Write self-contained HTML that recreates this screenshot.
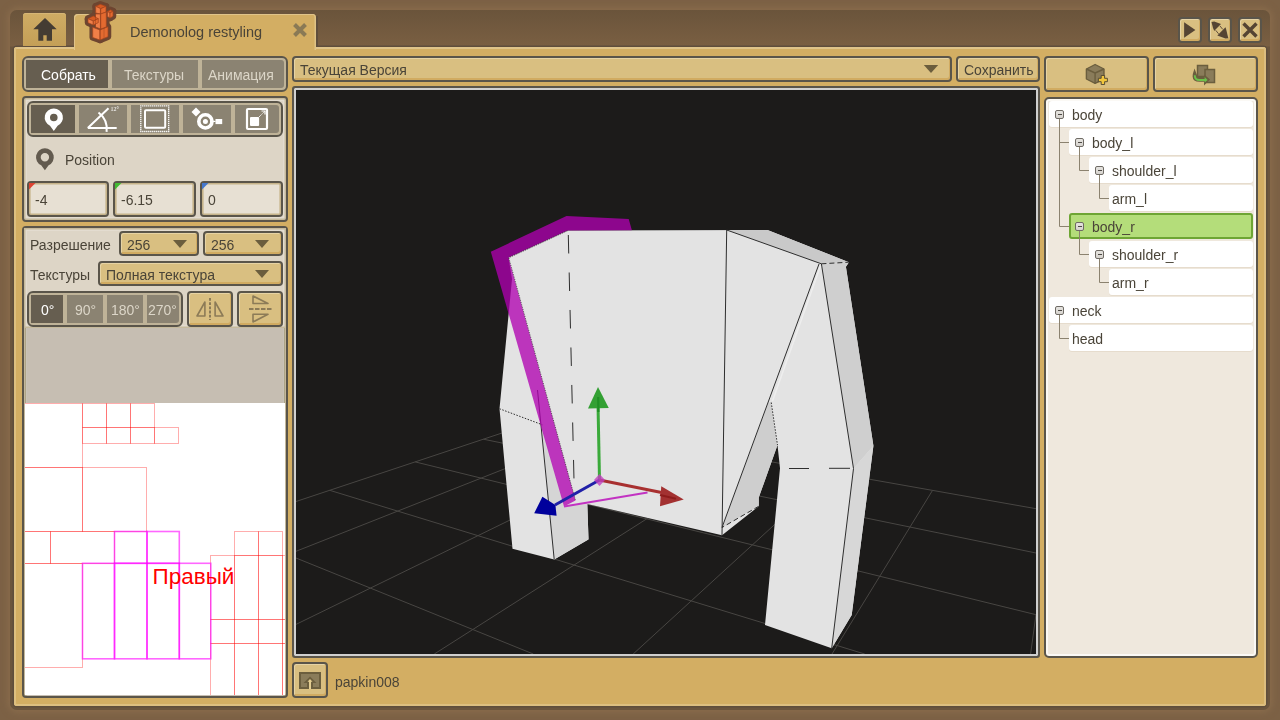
<!DOCTYPE html>
<html><head><meta charset="utf-8">
<style>
*{box-sizing:border-box;margin:0;padding:0}
html,body{width:1280px;height:720px;overflow:hidden}
body{background:#7c6145;font-family:"Liberation Sans",sans-serif;font-size:14px;color:#4a4438;position:relative}
.a{position:absolute}
.t{position:absolute;white-space:pre;line-height:1;will-change:transform}
.frame{left:10px;top:10px;width:1260px;height:700px;background:linear-gradient(#6a543b 0px,#7a5f42 36px,#6b553d 37px);border-radius:7px;box-shadow:0 0 7px 2px #8b6d4d}
.gold{left:14px;top:47px;width:1252px;height:659px;background:#d3ae63;border-radius:3px;box-shadow:inset 2px 0 0 #ddbf80,inset -2px 0 0 #dcbd7e,inset 0 -2px 0 #ddbf80,inset 0 2px 0 #e0c48a,0 0 0 1.5px #5f4e3c}
.dk{border:2px solid #5a554a}
.seg{position:absolute;background:#8b8372;color:#dcd6c8}
.seg.on{background:#665e50;color:#fff}
.btn{position:absolute;border:2px solid #5a554a;border-radius:4px;background:#d9bf81;box-shadow:inset 1px 1px 0 #e6d3a4,inset -1px -2px 0 #d1ab61}
.tri{position:absolute;width:0;height:0;border-left:7px solid transparent;border-right:7px solid transparent;border-top:8px solid #6b5d3d}
.item{position:absolute;background:#fff;border-radius:3px;height:26px;right:4px;box-shadow:0 1px 0 #e6dccd}
.mi{position:absolute;width:9px;height:9px;border:1px solid #6f6b65;border-radius:2px;background:linear-gradient(#e6e4e0,#d6d3ce)}
.mi:after{content:"";position:absolute;left:1.5px;top:3px;width:4px;height:1.3px;background:#4d4a45}
</style></head><body>
<div class="a frame"></div>
<div class="a" style="left:14px;top:45.5px;width:1252px;height:2px;background:#5f4e3c"></div>
<div class="a gold"></div>
<!-- home tab -->
<div class="a" style="left:23px;top:13px;width:43px;height:33px;background:linear-gradient(#cfac64,#c49f57);border-radius:3px 3px 0 0;box-shadow:inset 0 1px 0 #d6b676"></div>
<!-- active tab -->
<div class="a" style="left:74px;top:14px;width:242px;height:36px;background:#d3ae63;border-radius:4px 4px 0 0;box-shadow:inset 1px 1px 0 #e0c48a,inset -1.5px 0 0 #dfc386"></div>
<div class="a" style="left:316px;top:16px;width:2px;height:31px;background:#5f4e3c"></div>

<div class="t" style="left:130px;top:25px;font-size:14.5px">Demonolog restyling</div>

<!-- left: tab group -->
<div class="a dk" style="left:22px;top:56px;width:266px;height:36px;border-radius:6px;background:#bfb398"></div>
<div class="seg on" style="left:26px;top:60px;width:82px;height:28px"></div>
<div class="seg" style="left:112px;top:60px;width:86px;height:28px"></div>
<div class="seg" style="left:202px;top:60px;width:82px;height:28px;border-radius:0 3px 3px 0"></div>
<div class="t" style="left:41px;top:68px;color:#fff">Собрать</div>
<div class="t" style="left:124px;top:68px;color:#dcd6c8">Текстуры</div>
<div class="t" style="left:208px;top:68px;color:#dcd6c8">Анимация</div>

<!-- tools panel -->
<div class="a dk" style="left:22px;top:96px;width:266px;height:126px;border-radius:4px;background:#ddd5c6;box-shadow:inset 0 0 0 1.5px #c6ba9c,inset 0 0 0 3px #e3dcd0"></div>
<div class="a dk" style="left:27px;top:101px;width:256px;height:36px;border-radius:6px;background:#bfb398"></div>
<div class="seg on" style="left:31px;top:105px;width:44px;height:28px"></div>
<div class="seg" style="left:79px;top:105px;width:48px;height:28px"></div>
<div class="seg" style="left:131px;top:105px;width:48px;height:28px"></div>
<div class="seg" style="left:183px;top:105px;width:48px;height:28px"></div>
<div class="seg" style="left:235px;top:105px;width:44px;height:28px;border-radius:0 3px 3px 0"></div>

<div class="t" style="left:65px;top:153px">Position</div>
<div class="a dk" style="left:27px;top:181px;width:82px;height:36px;border-radius:4px;background:#e7e0d3;box-shadow:inset 0 0 0 1.6px #c6b389"></div>
<div class="a dk" style="left:113px;top:181px;width:83px;height:36px;border-radius:4px;background:#e7e0d3;box-shadow:inset 0 0 0 1.6px #c6b389"></div>
<div class="a dk" style="left:200px;top:181px;width:83px;height:36px;border-radius:4px;background:#e7e0d3;box-shadow:inset 0 0 0 1.6px #c6b389"></div>
<div class="t" style="left:35px;top:193px">-4</div>
<div class="t" style="left:121px;top:193px">-6.15</div>
<div class="t" style="left:208px;top:193px">0</div>

<!-- settings panel -->
<div class="a dk" style="left:22px;top:226px;width:266px;height:472px;border-radius:4px;background:#c6beb2;box-shadow:inset 1px 0 0 #c3b79b,inset 2px 0 0 #aca385,inset 3px 0 0 #c9c3b8,inset -1px 0 0 #c3b79b,inset -2px 0 0 #aca385,inset -3px 0 0 #c9c3b8"></div>
<div class="a" style="left:24px;top:228px;width:262px;height:100px;background:#ddd5c6;box-shadow:inset 0 0 0 1.5px #c6ba9c,inset 0 0 0 3px #e3dcd0"></div>
<div class="t" style="left:30px;top:238px">Разрешение</div>
<div class="btn" style="left:119px;top:231px;width:80px;height:25px"></div>
<div class="btn" style="left:203px;top:231px;width:80px;height:25px"></div>
<div class="t" style="left:127px;top:238px">256</div>
<div class="t" style="left:211px;top:238px">256</div>
<div class="t" style="left:30px;top:268px">Текстуры</div>
<div class="btn" style="left:98px;top:261px;width:185px;height:25px"></div>
<div class="t" style="left:106px;top:268px">Полная текстура</div>

<div class="a dk" style="left:27px;top:291px;width:156px;height:36px;border-radius:6px;background:#bfb398"></div>
<div class="seg on" style="left:31px;top:295px;width:32px;height:28px"></div>
<div class="seg" style="left:67px;top:295px;width:36px;height:28px"></div>
<div class="seg" style="left:107px;top:295px;width:36px;height:28px"></div>
<div class="seg" style="left:147px;top:295px;width:32px;height:28px;border-radius:0 3px 3px 0"></div>
<div class="t" style="left:41px;top:303px;color:#fff">0°</div>
<div class="t" style="left:75px;top:303px;color:#dcd6c8">90°</div>
<div class="t" style="left:111px;top:303px;color:#dcd6c8">180°</div>
<div class="t" style="left:148px;top:303px;color:#dcd6c8">270°</div>
<div class="btn" style="left:187px;top:291px;width:46px;height:36px"></div>
<div class="btn" style="left:237px;top:291px;width:46px;height:36px"></div>

<!-- texture canvas -->
<div class="a" style="left:25px;top:403px;width:260px;height:292px;background:#fff"></div>

<!-- TEX --><svg class="a" style="left:25px;top:403px" width="260" height="292" viewBox="25 403 260 292"><g fill="none" stroke="#ff0000" stroke-opacity="0.32" stroke-width="1"><rect x="24" y="403.5" width="58.5" height="64.0"/><rect x="82.5" y="403.5" width="24.0" height="24.0"/><rect x="106.5" y="403.5" width="24.0" height="24.0"/><rect x="130.5" y="403.5" width="24.0" height="24.0"/><rect x="82.5" y="427.5" width="24.0" height="16.0"/><rect x="106.5" y="427.5" width="24.0" height="16.0"/><rect x="130.5" y="427.5" width="24.0" height="16.0"/><rect x="154.5" y="427.5" width="24.0" height="16.0"/><rect x="24" y="467.5" width="58.5" height="64.0"/><rect x="82.5" y="467.5" width="64.0" height="64.0"/><rect x="24" y="531.5" width="26.5" height="32.0"/><rect x="50.5" y="531.5" width="64.0" height="32.0"/><rect x="24" y="563.5" width="58.5" height="104.0"/><rect x="234.5" y="531.5" width="24.0" height="24.0"/><rect x="258.5" y="531.5" width="24.0" height="24.0"/><rect x="210.5" y="555.5" width="24.0" height="64.0"/><rect x="234.5" y="555.5" width="24.0" height="64.0"/><rect x="258.5" y="555.5" width="24.0" height="64.0"/><rect x="282.5" y="555.5" width="17.5" height="64.0"/><rect x="210.5" y="619.5" width="24.0" height="24.0"/><rect x="234.5" y="619.5" width="24.0" height="24.0"/><rect x="258.5" y="619.5" width="24.0" height="24.0"/><rect x="282.5" y="619.5" width="17.5" height="24.0"/><rect x="210.5" y="643.5" width="24.0" height="56.5"/><rect x="234.5" y="643.5" width="24.0" height="56.5"/><rect x="258.5" y="643.5" width="24.0" height="56.5"/><rect x="282.5" y="643.5" width="17.5" height="56.5"/></g><g fill="none" stroke="#ff00ff" stroke-opacity="0.6" stroke-width="1.6"><rect x="114.5" y="531.5" width="32.5" height="31.799999999999955"/><rect x="147" y="531.5" width="32.30000000000001" height="31.799999999999955"/><rect x="82.5" y="563.3" width="32.0" height="95.5"/><rect x="114.5" y="563.3" width="32.5" height="95.5"/><rect x="147" y="563.3" width="32.30000000000001" height="95.5"/><rect x="179.3" y="563.3" width="31.5" height="95.5"/></g><text x="152.5" y="584.2" font-family="Liberation Sans" font-size="22.5" fill="#ff0000">Правый</text></svg><!-- /TEX -->
<!-- center top -->
<div class="btn" style="left:292px;top:56px;width:660px;height:26px"></div>
<div class="t" style="left:300px;top:63px">Текущая Версия</div>
<div class="btn" style="left:956px;top:56px;width:84px;height:26px"></div>
<div class="t" style="left:964px;top:63px">Сохранить</div>

<!-- viewport -->
<div class="a" style="left:292px;top:86px;width:748px;height:572px;border:2px solid #5a554a;border-radius:3px;background:#1c1b1a;box-shadow:inset 0 0 0 2px #d0d0cf"></div>

<!-- VP --><svg class="a" style="left:0;top:0" width="1280" height="720">
<defs><clipPath id="vp"><rect x="296" y="90" width="740" height="564"/></clipPath></defs>
<g clip-path="url(#vp)">
<path d="M539.0 420.7L296.0 501.5M599.3 431.4L296.0 551.3M667.1 443.4L296.0 624.4M743.9 457.0L434.3 654.0M831.5 472.5L633.2 654.0M932.5 490.4L832.0 654.0M1036.0 614.4L1030.6 654.0M539.0 420.7L1036.0 508.7M483.4 439.2L1036.0 553.0M415.2 461.9L1036.0 614.7M329.7 490.3L864.7 654.0M296.0 558.0L533.3 654.0" stroke="#484643" stroke-width="1" fill="none"/>
<polygon points="508.5,257.5 567.5,230.5 767.5,230 848.9,262.2 845.9,266.8 873.4,445.7 851.7,615 831.7,648.3 765,625 780,468.3 777.5,445 758.75,497.5 758.75,506.25 722,535.2 587.3,503.9 588.5,539.5 554.2,559.6 512.5,548.75 499.5,408.75 512,279" fill="#e3e3e3"/>
<polygon points="726.7,230 767.5,230 848.9,262.2 821.4,263.8" fill="#c9c9c9"/>
<polygon points="821.4,263.8 848.9,262.2 845.9,266.8 873.4,445.7 853.5,468.5" fill="#cfcfcf"/><polygon points="853.5,468.5 873.4,445.7 851.7,615 831.7,648.3" fill="#d7d7d7"/>
<polygon points="768.5,402.5 771.25,402.5 777.5,445 758.75,497.5 758.75,506.25 722,527.5" fill="#cecece"/>
<polygon points="541.7,426 554.2,559.4 588.5,539.3 587.3,503.9 564,506.5" fill="#d5d5d5"/>
<g stroke="#2e2e2e" stroke-width="1" fill="none">
<path d="M726.7 230L722 535M726.7 230L821.4 263.8M821.4 263.8L853.5 468.5L831.7 648.3M819 264L722 527.5M554.2 559.4L537.5 390"/>
<path d="M821.4 263.8L848.9 262.2M758.75 506.25L722 527.5" stroke-dasharray="5 3"/>
<path d="M771.25 402.5L777.5 445M499.5 408.75L542.4 424.8" stroke-dasharray="1.5 1.5"/>
<path d="M789 468.5L809 468.5M829 468.3L850 468.3"/>
<path d="M568.3 235L574 480" stroke-dasharray="18.5 19"/>
</g>
<path d="M820.5 266L772.5 401" stroke="#eeeeee" stroke-width="1.5"/>
<polygon points="490.8,251.7 566.5,216 628.7,219 631.9,230.2 567.5,230.5 508.5,257.5 575.5,500.5 564,506.5" fill="#b000b0" fill-opacity="0.77"/>
<path d="M567.5 230.8L508.8 257.8L575.5 500.5" stroke="#1e1e1e" stroke-width="0.9" fill="none" stroke-dasharray="1.2 1.2" opacity="0.7"/>
<path d="M564 506.5L647.5 492.5" stroke="#c233c2" stroke-width="2"/>
<path d="M599.5 480L598 404" stroke="#3aaa3a" stroke-width="3"/>
<polygon points="598,387 608.75,408 588,408.5" fill="#33a033"/><path d="M598.2 397L598.4 412" stroke="#1f8f24" stroke-width="2.2"/>
<path d="M599.5 480L664 493" stroke="#a83030" stroke-width="3"/>
<polygon points="683.75,499.5 661.25,486.25 660,506.25" fill="#a33131"/><path d="M660 495L676 498.7" stroke="#8e1c1c" stroke-width="2.2"/>
<path d="M599.5 480L555 505" stroke="#2020a8" stroke-width="3"/>
<polygon points="534.2,513.3 542.4,496.8 555.4,505.1 556.6,515.7" fill="#00009c"/>
<polygon points="599.5,474 605,480 599.5,486 594,480" fill="#c040c0" fill-opacity="0.8"/>
</g></svg><!-- /VP -->
<!-- bottom -->
<div class="btn" style="left:292px;top:662px;width:36px;height:36px"></div>
<div class="t" style="left:335px;top:675px">papkin008</div>

<!-- right -->
<div class="btn" style="left:1044px;top:56px;width:105px;height:36px"></div>
<div class="btn" style="left:1153px;top:56px;width:105px;height:36px"></div>
<div class="a" style="left:1044px;top:97px;width:214px;height:561px;border:2px solid #5a554a;border-radius:5px;background:#efe8dd;box-shadow:inset 0 0 0 2px #fbf9f5"></div>

<!-- tree -->
<div class="item" style="left:1049px;top:101px;width:204px"></div>
<div class="item" style="left:1069px;top:129px;width:184px"></div>
<div class="item" style="left:1089px;top:157px;width:164px"></div>
<div class="item" style="left:1109px;top:185px;width:144px"></div>
<div class="a" style="left:1069px;top:213px;width:184px;height:26px;background:#b4dd7a;border:2px solid #6ea534;border-radius:3px"></div>
<div class="item" style="left:1089px;top:241px;width:164px"></div>
<div class="item" style="left:1109px;top:269px;width:144px"></div>
<div class="item" style="left:1049px;top:297px;width:204px"></div>
<div class="item" style="left:1069px;top:325px;width:184px"></div>
<svg class="a" style="left:0;top:0" width="1280" height="720"><g stroke="#8b826f" stroke-width="1" fill="none"><path d="M1059.5 119L1059.5 226.5"/><path d="M1059.5 142.5L1069 142.5"/><path d="M1059.5 226.5L1069 226.5"/><path d="M1079.5 147L1079.5 170.5"/><path d="M1079.5 170.5L1089 170.5"/><path d="M1099.5 175L1099.5 198.5"/><path d="M1099.5 198.5L1109 198.5"/><path d="M1079.5 231L1079.5 254.5"/><path d="M1079.5 254.5L1089 254.5"/><path d="M1099.5 259L1099.5 282.5"/><path d="M1099.5 282.5L1109 282.5"/><path d="M1059.5 315L1059.5 338.5"/><path d="M1059.5 338.5L1069 338.5"/></g></svg>
<div class="mi" style="left:1055px;top:110px"></div>
<div class="t" style="left:1072px;top:108px">body</div>
<div class="mi" style="left:1075px;top:138px"></div>
<div class="t" style="left:1092px;top:136px">body_l</div>
<div class="mi" style="left:1095px;top:166px"></div>
<div class="t" style="left:1112px;top:164px">shoulder_l</div>
<div class="t" style="left:1112px;top:192px">arm_l</div>
<div class="mi" style="left:1075px;top:222px"></div>
<div class="t" style="left:1092px;top:220px">body_r</div>
<div class="mi" style="left:1095px;top:250px"></div>
<div class="t" style="left:1112px;top:248px">shoulder_r</div>
<div class="t" style="left:1112px;top:276px">arm_r</div>
<div class="mi" style="left:1055px;top:306px"></div>
<div class="t" style="left:1072px;top:304px">neck</div>
<div class="t" style="left:1072px;top:332px">head</div>
<!-- window buttons -->
<div class="btn" style="left:1178px;top:17px;width:24px;height:25.5px"></div>
<div class="btn" style="left:1208px;top:17px;width:24px;height:25.5px"></div>
<div class="btn" style="left:1238px;top:17px;width:24px;height:25.5px"></div>

<!-- ICONS --><svg class="a" style="left:0;top:0" width="1280" height="720">
<!-- home -->
<path d="M45 18L56.7 29.2H52V40.8H46.7V35.3H43.3V40.8H38.3V29.2H33.3Z" fill="#443c33"/>
<!-- logo -->
<g stroke="#6e4530" stroke-width="6.5" stroke-linejoin="round" fill="#6e4530"><path d="M95.7 6.3L100.3 4.3L106 6.3L100.7 8.7Z"/><path d="M95.7 6.3L100.7 8.7L100.7 14L95.7 13Z"/><path d="M100.7 8.7L106 6.3L106 12L100.7 14Z"/><path d="M107.5 11.5L110.5 9.8L113 11.2L110 13Z"/><path d="M107.5 11.5L110 13L110 18L107.5 16.5Z"/><path d="M110 13L113 11.2L113 16.3L110 18Z"/><path d="M95.5 14L100.7 14L100.7 29L95.5 27Z"/><path d="M100.7 14L106.3 12L106.3 27L100.7 29Z"/><path d="M88 18.7L93.3 16L98.3 18.7L93.3 21Z"/><path d="M88 18.7L93.3 21L93.3 25L88 22.7Z"/><path d="M93.3 21L98.3 18.7L98.3 22.7L93.3 25Z"/><path d="M92.7 27.3L100 30L100 40L92.7 37.5Z"/><path d="M100 30L108 26.7L108 36.7L100 40Z"/></g>
<g stroke="#a4441c" stroke-width="0.7" stroke-linejoin="round"><path d="M95.7 6.3L100.3 4.3L106 6.3L100.7 8.7Z" fill="#d65a22"/><path d="M95.7 6.3L100.7 8.7L100.7 14L95.7 13Z" fill="#f07f48"/><path d="M100.7 8.7L106 6.3L106 12L100.7 14Z" fill="#e46a30"/><path d="M107.5 11.5L110.5 9.8L113 11.2L110 13Z" fill="#d65a22"/><path d="M107.5 11.5L110 13L110 18L107.5 16.5Z" fill="#f07f48"/><path d="M110 13L113 11.2L113 16.3L110 18Z" fill="#e46a30"/><path d="M95.5 14L100.7 14L100.7 29L95.5 27Z" fill="#f07f48"/><path d="M100.7 14L106.3 12L106.3 27L100.7 29Z" fill="#e46a30"/><path d="M88 18.7L93.3 16L98.3 18.7L93.3 21Z" fill="#d65a22"/><path d="M88 18.7L93.3 21L93.3 25L88 22.7Z" fill="#f07f48"/><path d="M93.3 21L98.3 18.7L98.3 22.7L93.3 25Z" fill="#e46a30"/><path d="M92.7 27.3L100 30L100 40L92.7 37.5Z" fill="#f07f48"/><path d="M100 30L108 26.7L108 36.7L100 40Z" fill="#e46a30"/></g>
<path d="M100.3 9V40M104 28V38.5M95.5 14V27" stroke="#8a3a1a" stroke-width="0.6" opacity="0.6"/>
<!-- tab close -->
<path d="M294.5 24.5L305.5 35.5M305.5 24.5L294.5 35.5" stroke="#8a7a55" stroke-width="4"/>
<!-- window buttons -->
<path d="M1184.1 22.2L1195.4 30L1184.1 37.8Z" fill="#554433"/>
<path d="M1243.5 23.5L1256.5 36.5M1256.5 23.5L1243.5 36.5" stroke="#554433" stroke-width="3.4"/>
<path d="M1211.5 22L1214.2 21.5L1221 24L1215 30L1214.3 31L1213 28Z" fill="#554433"/><path d="M1228.3 38.2L1225.5 38.5L1217.3 35.6L1225.5 27.2L1226.2 29.5Z" fill="#554433"/><path d="M1220 26L1222.7 29.3M1215.7 30.3L1218.6 33.8" stroke="#554433" stroke-width="0.9"/>
<!-- tool icons -->
<path fill="#fff" fill-rule="evenodd" d="M53.8 108.5A9 9 0 0 1 57.6 125.7L53.8 131L50 125.7A9 9 0 0 1 53.8 108.5ZM53.8 113.7A3.8 3.8 0 1 0 53.8 121.3A3.8 3.8 0 1 0 53.8 113.7Z"/>
<g stroke="#fff" stroke-width="2" fill="none">
<path d="M87.8 128H116.7M87.8 128L108.5 108.3"/>
<path d="M98.5 112.5A21 21 0 0 1 106.6 131.8" />
</g>
<text x="110.5" y="111" font-family="Liberation Serif" font-size="6" fill="#fff">12°</text>
<path fill="#fff" d="M140.15 105.15h1.3v1.3h-1.3zM140.15 130.85h1.3v1.3h-1.3zM142.14 105.15h1.3v1.3h-1.3zM142.14 130.85h1.3v1.3h-1.3zM144.14 105.15h1.3v1.3h-1.3zM144.14 130.85h1.3v1.3h-1.3zM146.13 105.15h1.3v1.3h-1.3zM146.13 130.85h1.3v1.3h-1.3zM148.12 105.15h1.3v1.3h-1.3zM148.12 130.85h1.3v1.3h-1.3zM150.11 105.15h1.3v1.3h-1.3zM150.11 130.85h1.3v1.3h-1.3zM152.11 105.15h1.3v1.3h-1.3zM152.11 130.85h1.3v1.3h-1.3zM154.10 105.15h1.3v1.3h-1.3zM154.10 130.85h1.3v1.3h-1.3zM156.09 105.15h1.3v1.3h-1.3zM156.09 130.85h1.3v1.3h-1.3zM158.09 105.15h1.3v1.3h-1.3zM158.09 130.85h1.3v1.3h-1.3zM160.08 105.15h1.3v1.3h-1.3zM160.08 130.85h1.3v1.3h-1.3zM162.07 105.15h1.3v1.3h-1.3zM162.07 130.85h1.3v1.3h-1.3zM164.06 105.15h1.3v1.3h-1.3zM164.06 130.85h1.3v1.3h-1.3zM166.06 105.15h1.3v1.3h-1.3zM166.06 130.85h1.3v1.3h-1.3zM168.05 105.15h1.3v1.3h-1.3zM168.05 130.85h1.3v1.3h-1.3zM140.15 107.13h1.3v1.3h-1.3zM168.05 107.13h1.3v1.3h-1.3zM140.15 109.10h1.3v1.3h-1.3zM168.05 109.10h1.3v1.3h-1.3zM140.15 111.08h1.3v1.3h-1.3zM168.05 111.08h1.3v1.3h-1.3zM140.15 113.06h1.3v1.3h-1.3zM168.05 113.06h1.3v1.3h-1.3zM140.15 115.03h1.3v1.3h-1.3zM168.05 115.03h1.3v1.3h-1.3zM140.15 117.01h1.3v1.3h-1.3zM168.05 117.01h1.3v1.3h-1.3zM140.15 118.99h1.3v1.3h-1.3zM168.05 118.99h1.3v1.3h-1.3zM140.15 120.97h1.3v1.3h-1.3zM168.05 120.97h1.3v1.3h-1.3zM140.15 122.94h1.3v1.3h-1.3zM168.05 122.94h1.3v1.3h-1.3zM140.15 124.92h1.3v1.3h-1.3zM168.05 124.92h1.3v1.3h-1.3zM140.15 126.90h1.3v1.3h-1.3zM168.05 126.90h1.3v1.3h-1.3zM140.15 128.87h1.3v1.3h-1.3zM168.05 128.87h1.3v1.3h-1.3z"/>
<rect x="145" y="110.2" width="20.2" height="17.6" rx="1" fill="none" stroke="#fff" stroke-width="2"/>
<path fill="#fff" fill-rule="evenodd" d="M205.4 113A8.4 8.4 0 1 0 205.4 129.8A8.4 8.4 0 1 0 205.4 113ZM205.4 116.6A4.8 4.8 0 1 1 205.4 126.2A4.8 4.8 0 1 1 205.4 116.6Z"/>
<circle cx="205.4" cy="121.4" r="2.5" fill="#fff"/>
<path d="M210 121.4H215.5" stroke="#fff" stroke-width="1.2"/>
<rect x="215.5" y="119" width="6.7" height="5.1" fill="#fff"/>
<path d="M196 107.5L200.5 112L196 116.5L191.5 112Z" fill="#fff"/>
<rect x="247" y="109" width="20" height="20" rx="1" fill="none" stroke="#fff" stroke-width="2.2"/>
<rect x="250" y="117" width="9.1" height="8.9" rx="1" fill="#fff"/>
<path d="M259 117L264.5 111.5" stroke="#fff" stroke-width="1" stroke-dasharray="1.2 0.6"/>
<path d="M261.5 111H265V114.5" stroke="#fff" stroke-width="1.2" fill="none"/>
<!-- position pin -->
<path fill="#635b4f" fill-rule="evenodd" d="M44.9 148.3A8.9 8.9 0 0 1 48.6 165.3L44.9 170.3L41.2 165.3A8.9 8.9 0 0 1 44.9 148.3ZM44.9 153A4.2 4.2 0 1 0 44.9 161.4A4.2 4.2 0 1 0 44.9 153Z"/>
<!-- input corners -->
<path d="M29 183H35.5L29 189.5Z" fill="#dd4433"/>
<path d="M115 183H121.5L115 189.5Z" fill="#44bb33"/>
<path d="M202 183H208.5L202 189.5Z" fill="#4477cc"/>
<!-- dropdown arrows -->
<path d="M173 240H187L180 248Z" fill="#6b5d3d"/>
<path d="M255 240H269L262 248Z" fill="#6b5d3d"/>
<path d="M255 270H269L262 278Z" fill="#6b5d3d"/>
<path d="M923.8 65H938.2L931 73Z" fill="#6b5d3d"/>
<!-- flip icons -->
<g stroke="#8c7b57" stroke-width="1.6" fill="none" stroke-linejoin="round">
<path d="M204.9 302L197 316H204.9Z"/>
<path d="M215.1 302L223 316H215.1Z"/>
<path d="M210 298V320" stroke-width="2" stroke-dasharray="2.8 1.4"/>
<path d="M253 296V303.5H268Z"/>
<path d="M253 322V314.3H268Z"/>
<path d="M249 309H272" stroke-width="2" stroke-dasharray="4.5 1.5"/>
</g>
<!-- cube add -->
<g stroke="#6b5e3e" stroke-width="1.4" stroke-linejoin="round">
<path d="M1095.1 64.5L1104 69L1104 79L1095.1 83.4L1086.4 79L1086.4 69Z" fill="#8a7c5a"/>
<path d="M1086.4 69L1095.1 73L1104 69M1095.1 73V83.4" fill="none"/>
</g>
<path d="M1101.2 75.5H1104.6V78.3H1107.4V81.7H1104.6V84.5H1101.2V81.7H1098.4V78.3H1101.2Z" fill="#f2c63c" stroke="#4e4530" stroke-width="0.9"/>
<!-- copy -->
<g stroke="#6b5e3e" stroke-width="1.5" fill="#8a7c5a">
<rect x="1197.5" y="65.5" width="10" height="11"/>
<rect x="1205" y="69.5" width="9.5" height="13"/>
</g>
<path d="M1194.5 68.5L1197 75V76Q1197 77 1199.5 77H1204.5V74.8L1210 79.5L1204 85.5V81.8H1199.5Q1192.8 81.8 1192.6 76.5L1192.8 74Z" fill="#6b5e3e"/>
<path d="M1194.8 75.2Q1194.8 80 1199.5 80H1205" stroke="#6cc04a" stroke-width="1.9" fill="none"/>
<path d="M1204.6 77L1207.6 79.9L1204.6 82.6Z" fill="#6cc04a"/>
<!-- bottom button icon -->
<rect x="300" y="673" width="20" height="15" fill="#8a7c5a" stroke="#6b5e3e" stroke-width="2"/>
<path d="M310 676.5L316.5 683H313V689H307V683H303.5Z" fill="#6b5e3e"/>
<path d="M310 679L312.5 681.8H311V689H309V681.8H307.5Z" fill="#e3cd92"/>
</svg>
<!-- /ICONS -->
</body></html>
